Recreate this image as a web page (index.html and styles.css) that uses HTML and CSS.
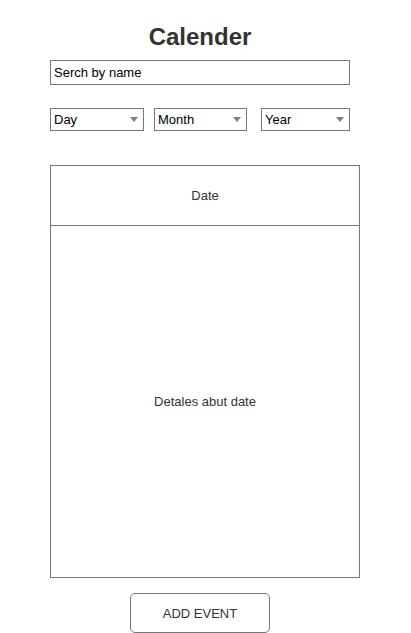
FILE: index.html
```html
<!DOCTYPE html>
<html lang="en">
<head>
<meta charset="utf-8">
<title>Calender</title>
<link rel="stylesheet" href="styles.css">
</head>
<body>
<div class="page">
  <h1 class="title">Calender</h1>
  <div class="search">Serch by name</div>
  <div class="filters">
    <div class="select sel-day"><span>Day</span><i class="caret"></i></div>
    <div class="select sel-month"><span>Month</span><i class="caret"></i></div>
    <div class="select sel-year"><span>Year</span><i class="caret"></i></div>
  </div>
  <div class="table">
    <div class="table-head">Date</div>
    <div class="table-body">Detales abut date</div>
  </div>
  <div class="actions">
    <div class="btn">ADD EVENT</div>
  </div>
</div>
</body>
</html>
```
FILE: styles.css
```css
html, body {
  margin: 0;
  padding: 0;
  background: #fff;
}
body {
  font-family: "Liberation Sans", Arial, sans-serif;
  font-size: 13px;
  color: #000;
}
.page {
  padding: 23px 0 0 50px;
  width: 310px;
}
.title {
  margin: 0;
  width: 300px;
  text-align: center;
  font-size: 24px;
  line-height: 28px;
  font-weight: bold;
  color: #333;
}
.search {
  margin-top: 9px;
  width: 300px;
  height: 25px;
  box-sizing: border-box;
  border: 1px solid #777;
  padding-left: 3px;
  display: flex;
  align-items: center;
  color: #000;
}
.filters {
  margin-top: 23px;
  display: flex;
}
.select {
  height: 23px;
  box-sizing: border-box;
  border: 1px solid #777;
  padding: 0 5px 0 3px;
  display: flex;
  align-items: center;
  justify-content: space-between;
  color: #000;
}
.sel-day { width: 94px; }
.sel-month { width: 93px; margin-left: 10px; }
.sel-year { width: 89px; margin-left: 14px; }
.caret {
  width: 0;
  height: 0;
  border-left: 4.5px solid transparent;
  border-right: 4.5px solid transparent;
  border-top: 5px solid #808080;
}
.table {
  margin-top: 34px;
  width: 310px;
  border: 1px solid #777;
  box-sizing: border-box;
  color: #333;
}
.table-head {
  height: 60px;
  box-sizing: border-box;
  border-bottom: 1px solid #777;
  display: flex;
  align-items: center;
  justify-content: center;
}
.table-body {
  height: 351px;
  display: flex;
  align-items: center;
  justify-content: center;
}
.actions {
  width: 300px;
  margin-top: 15px;
  display: flex;
  justify-content: center;
}
.btn {
  width: 140px;
  height: 40px;
  box-sizing: border-box;
  border: 1px solid #777;
  border-radius: 5px;
  display: flex;
  align-items: center;
  justify-content: center;
  color: #333;
}
```
